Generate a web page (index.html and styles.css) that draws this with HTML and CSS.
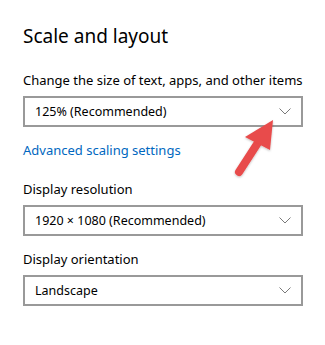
FILE: index.html
```html
<!DOCTYPE html>
<html lang="en">
<head>
  <meta charset="UTF-8">
  <meta name="viewport" content="width=device-width, initial-scale=1.0">
  <title>Scale and layout</title>
  <link rel="stylesheet" href="styles.css">
</head>
<body>
  <div class="settings">
    <h2 class="title">Scale and layout</h2>

    <div class="field">
      <div class="label">Change the size of text, apps, and other items</div>
      <div class="select">
        <span>125% (Recommended)</span>
        <svg class="chevron" width="12" height="7" viewBox="0 0 12 7"><path d="M0.5 0.5 L6 6 L11.5 0.5" fill="none" stroke="#7a7a7a" stroke-width="1"/></svg>
      </div>
    </div>

    <a class="link" href="#">Advanced scaling settings</a>

    <div class="field">
      <div class="label">Display resolution</div>
      <div class="select">
        <span>1920 × 1080 (Recommended)</span>
        <svg class="chevron" width="12" height="7" viewBox="0 0 12 7"><path d="M0.5 0.5 L6 6 L11.5 0.5" fill="none" stroke="#7a7a7a" stroke-width="1"/></svg>
      </div>
    </div>

    <div class="field">
      <div class="label">Display orientation</div>
      <div class="select">
        <span>Landscape</span>
        <svg class="chevron" width="12" height="7" viewBox="0 0 12 7"><path d="M0.5 0.5 L6 6 L11.5 0.5" fill="none" stroke="#7a7a7a" stroke-width="1"/></svg>
      </div>
    </div>
  </div>

  <!-- annotation arrow drawn over the first dropdown -->
  <svg class="arrow" width="60" height="70" viewBox="0 0 60 70">
    <defs>
      <filter id="shadow" x="-20%" y="-20%" width="140%" height="140%">
        <feDropShadow dx="0" dy="1" stdDeviation="1" flood-color="#000" flood-opacity="0.25"/>
      </filter>
    </defs>
    <g filter="url(#shadow)">
      <line x1="14" y1="62" x2="36" y2="28" stroke="#e84b4b" stroke-width="8" stroke-linecap="round"/>
      <polygon points="48,10 20,27 45,40" fill="#e84b4b"/>
    </g>
  </svg>
</body>
</html>
```

FILE: styles.css
```css
body {
  margin: 0;
  background-color: #fff;
  font-family: 'Noto Sans', 'Open Sans', sans-serif;
  color: #000;
  position: relative;
}

.settings {
  padding: 22px 22px 0 23px;
}

.title {
  font-size: 19px;
  font-weight: 400;
  line-height: 28px;
  margin: 0 0 20px;
}

.field {
  margin-bottom: 13px;
}

.label {
  font-size: 13px;
  line-height: 20px;
  white-space: nowrap;
  margin-bottom: 6px;
}

.select {
  box-sizing: border-box;
  width: 280px;
  height: 31px;
  border: 2px solid #999;
  display: flex;
  align-items: center;
  justify-content: space-between;
  padding: 0 10px 0 10px;
  font-size: 12.5px;
}

.chevron {
  display: block;
}

.link {
  display: block;
  color: #0067c0;
  text-decoration: none;
  font-size: 13px;
  line-height: 20px;
  margin: 0 0 19px;
}

.arrow {
  position: absolute;
  left: 225px;
  top: 110px;
}
```
